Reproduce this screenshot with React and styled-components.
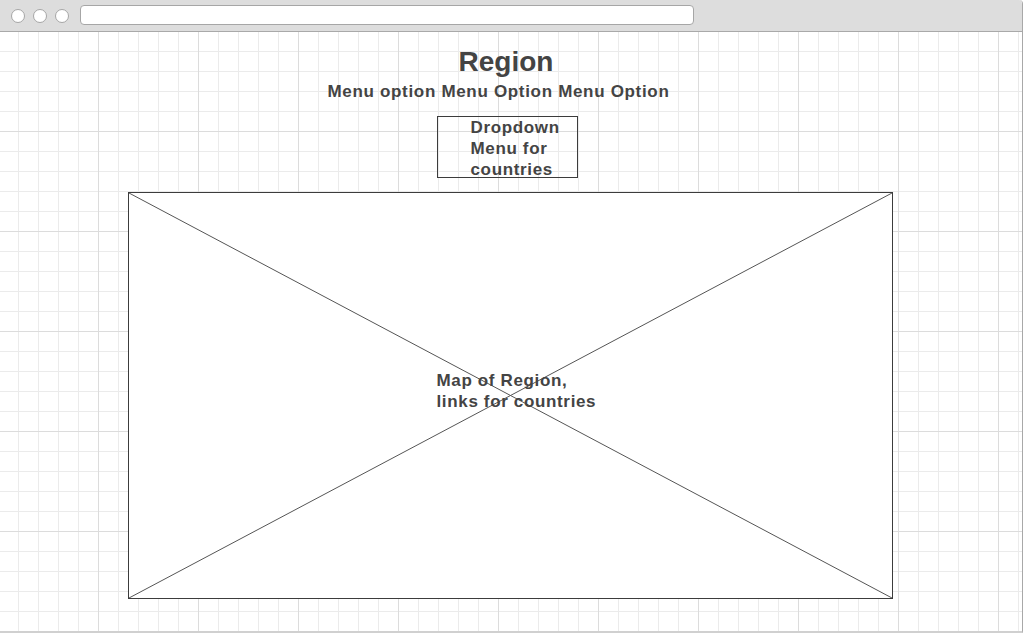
import React from "react";
import styled, { createGlobalStyle } from "styled-components";

const GlobalStyle = createGlobalStyle`
  html, body {
    margin: 0;
    padding: 0;
    background: #ffffff;
  }
  body {
    font-family: "Liberation Sans", Arial, sans-serif;
  }
`;

const Window = styled.div`
  width: 1022px;
  height: 631px;
  display: flex;
  flex-direction: column;
  border-right: 1px solid #a8a8a8;
  border-bottom: 2px solid #d0d0d0;
  border-top-right-radius: 4px;
  overflow: hidden;
`;

const TitleBar = styled.div`
  height: 31px;
  flex: 0 0 31px;
  display: flex;
  align-items: center;
  padding-left: 11px;
  gap: 8px;
  background: #dddddd;
  border-bottom: 1px solid #a9a9a9;
`;

const Light = styled.span`
  width: 12px;
  height: 12px;
  border-radius: 50%;
  background: #ffffff;
  border: 1px solid #a6a6a6;
  margin-top: 1px;
`;

const AddressBar = styled.div`
  width: 612px;
  height: 18px;
  margin-left: 3px;
  margin-top: -1px;
  background: #ffffff;
  border: 1px solid #a6a6a6;
  border-radius: 4px;
`;

const Canvas = styled.div`
  flex: 1;
  display: flex;
  flex-direction: column;
  align-items: center;
  padding-top: 14px;
  background-color: #ffffff;
  background-image:
    linear-gradient(to right, #dcdcdc 1px, transparent 1px),
    linear-gradient(to bottom, #dcdcdc 1px, transparent 1px),
    linear-gradient(to right, #ebebeb 1px, transparent 1px),
    linear-gradient(to bottom, #ebebeb 1px, transparent 1px);
  background-size: 100px 100px, 100px 100px, 20px 20px, 20px 20px;
  background-position: 98px 0, 0 99px, 18px 0, 0 19px;
`;

const Title = styled.h1`
  margin: 0 10px 0 0;
  font-size: 28px;
  line-height: 32px;
  font-weight: bold;
  color: #444444;
`;

const MenuRow = styled.nav`
  margin: 4px 25px 0 0;
  font-size: 17px;
  line-height: 20px;
  letter-spacing: 0.68px;
  font-weight: bold;
  color: #444444;
`;

const Dropdown = styled.div`
  box-sizing: border-box;
  width: 141px;
  height: 62px;
  margin: 14px 8px 0 0;
  padding-left: 33px;
  border: 1px solid #3c3c3c;
  font-size: 17px;
  line-height: 21px;
  letter-spacing: 0.65px;
  font-weight: bold;
  color: #444444;
`;

const DropdownText = styled.div`
  width: 100px;
`;

const Map = styled.div`
  position: relative;
  box-sizing: border-box;
  width: 765px;
  height: 407px;
  margin: 14px 2px 0 0;
  border: 1px solid #3c3c3c;
  background: #ffffff;
  display: flex;
  align-items: center;
  padding: 0 0 9px 308px;
`;

const Cross = styled.svg`
  position: absolute;
  inset: 0;
  width: 100%;
  height: 100%;
`;

const MapLabel = styled.div`
  position: relative;
  font-size: 17px;
  line-height: 21px;
  letter-spacing: 0.65px;
  font-weight: bold;
  color: #444444;
`;

export default function App() {
  return (
    <>
      <GlobalStyle />
      <Window>
        <TitleBar>
          <Light />
          <Light />
          <Light />
          <AddressBar />
        </TitleBar>
        <Canvas>
          <Title>Region</Title>
          <MenuRow>Menu option Menu Option Menu Option</MenuRow>
          <Dropdown>
            <DropdownText>Dropdown Menu for countries</DropdownText>
          </Dropdown>
          <Map>
            <Cross viewBox="0 0 763 405" preserveAspectRatio="none">
              <line x1="0" y1="0" x2="763" y2="405" stroke="#555" strokeWidth="1" />
              <line x1="763" y1="0" x2="0" y2="405" stroke="#555" strokeWidth="1" />
            </Cross>
            <MapLabel>
              Map of Region,
              <br />
              links for countries
            </MapLabel>
          </Map>
        </Canvas>
      </Window>
    </>
  );
}
